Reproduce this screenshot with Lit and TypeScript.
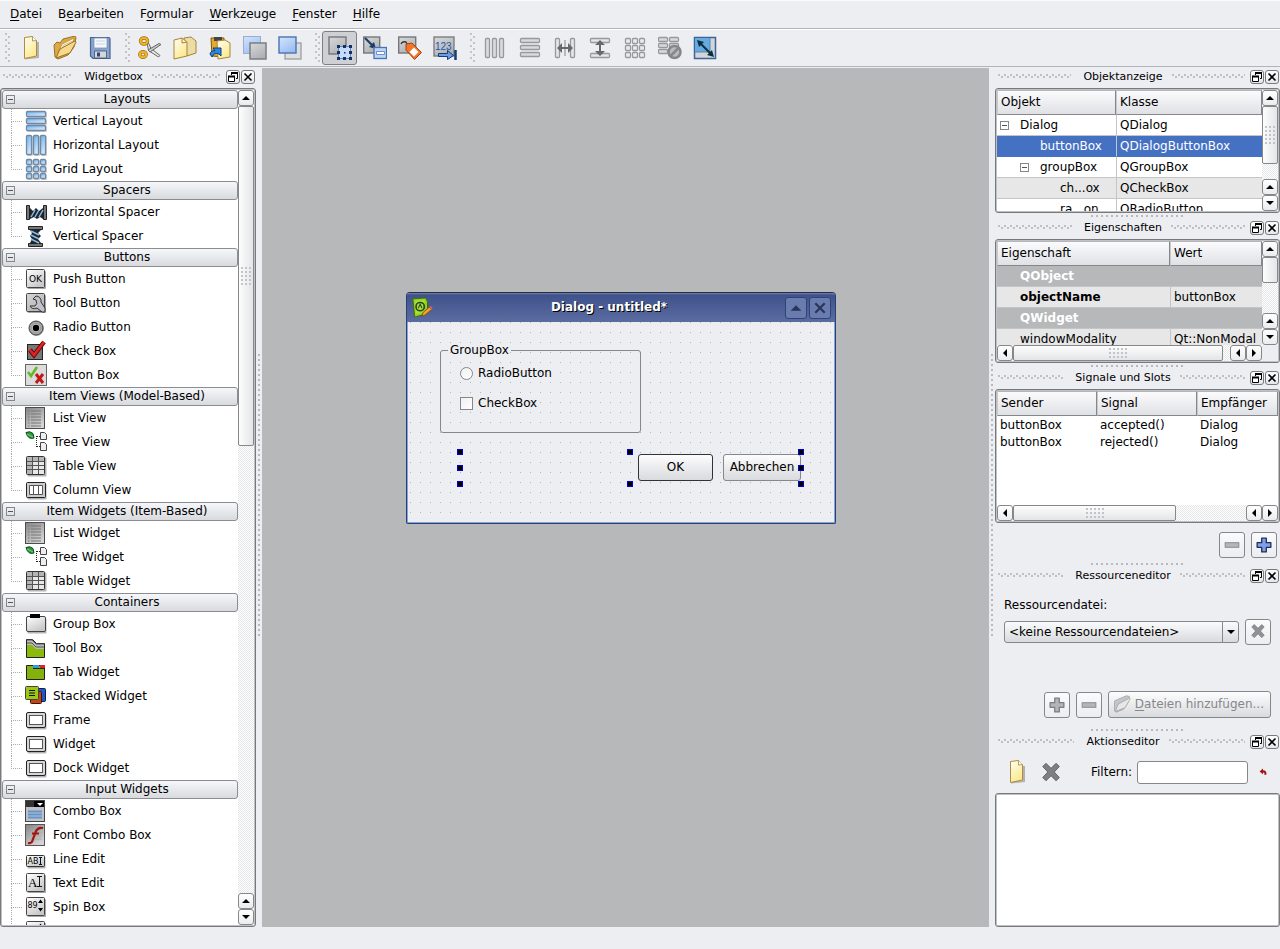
import { LitElement, html, svg, css, nothing } from "lit";
import { customElement, property } from "lit/decorators.js";
import { classMap } from "lit/directives/class-map.js";

/* ---------- icon drawings ---------- */

const sheet = svg`<path d="M7 22.500l13-1.500V6" fill="none" stroke="#000" opacity=".25" stroke-width="2"/>
  <path d="M6.500 1.500l8-1 4 4v15.500l-12 2.500z" fill="url(#paper)" stroke="#b08a40" stroke-linejoin="round"/>
  <path d="M14.500 .5v4.500l4-.5" fill="#fffdf0" stroke="#9d8450" stroke-width=".8"/>`;

const tile = (x: number, y: number, w: number, h: number, fill: string, line: string) =>
  svg`<rect x=${x + 0.5} y=${y + 0.5} width=${w - 1} height=${h - 1} rx="1" fill=${fill} stroke=${line} stroke-width="1.300"/>`;

const bluePart = (x: number, y: number, w: number, h: number) =>
  svg`<rect x=${x + 1} y=${y + 1} width=${w} height=${h} rx="1" fill="#000" opacity=".2"/>${tile(x, y, w, h, "url(#blue)", "#7288a3")}`;

const grid = (part: (x: number, y: number) => unknown) => [0, 1, 2].map((r) => [0, 1, 2].map((c) => part(1 + c * 7, 1 + r * 7)));

const plus = (fill: string, line: string) =>
  svg`<path d="M9.500 4.500h5v5h5v5h-5v5h-5v-5h-5v-5h5z" fill=${fill} stroke=${line} stroke-linejoin="round" stroke-width="1.400"/>`;

const cross = (fill: string, line: string) =>
  svg`<path d="M3 6l3.500-3.500L12 8l5.500-5.500L21 6l-5.500 6 5.500 6-3.500 3.500L12 16l-5.500 5.500L3 18l5.500-6z" fill=${fill} stroke=${line} stroke-linejoin="round"/>`;

const listPage = svg`<rect x=".5" y=".5" width="19" height="21" fill="url(#steel)" stroke="#4d4d4d"/>
  <path d="M3 4h1.500M3 7h1.500M3 10h1.500M3 13h1.500M3 16h1.500M3 19h1.500M6 4h10M6 7h10M6 10h10M6 13h10M6 16h10M6 19h10" stroke="#777"/>`;

const treePic = svg`<path d="M1 1.500q4-2 7 1l1 4.500q-6 2-8-5.500z" fill="#2f9a3c" stroke="#0d4a18"/><path d="M2 3l6 3" stroke="#8fe098" stroke-width=".8"/>
  <path d="M11.500 5v12M12 5.500h4M12 15.500h4" stroke="#222" stroke-dasharray="1 1"/>
  <path d="M15.500 1.500h4l2 2v5h-6zM15.500 11.500h4l2 2v6h-6z" fill="#eee" stroke="#444"/>`;

const tablePic = svg`<rect x="2.500" y="2.500" width="19" height="19" rx="1" fill="#000" opacity=".3"/><rect x="1.500" y="1.500" width="18" height="18" rx="1" fill="#e8e8e8" stroke="#333"/>
  <path d="M2 2h17v4H2zM2 2h5v17H2z" fill="#b5b5b5"/>
  <path d="M2 6.500h17M2 10.500h17M2 14.500h17M7.500 2v17M13.500 2v17" stroke="#555"/>`;

const framePic = svg`<rect x="2.500" y="4.500" width="19" height="16" rx="1.500" fill="#000" opacity=".3"/><rect x="1.500" y="3.500" width="19" height="15" rx="1.500" fill="#d6d6d6" stroke="#222"/>
  <rect x="4.500" y="6.500" width="13" height="9" fill="#fff" stroke="#555"/>`;

const keycap = svg`<rect x="2.500" y="3" width="18.500" height="18" rx="1" fill="#000" opacity=".35"/><rect x="1.500" y="1.500" width="18" height="18" rx="1" fill="url(#key)" stroke="#444"/>`;

const PICTURES: Record<string, unknown> = {
  neu: sheet,
  open: svg`<path d="M1 9l3-3 3 1 3-4 12-3 1 2-2 9-6 8-10 4-3-2z" fill="#dba945" stroke="#9a7226"/><path d="M5 17L9 8 21 2l-2 10-9 8z" fill="#fff7dc" stroke="#b58a35" stroke-width=".8"/><path d="M7 16l4-7 9-4" fill="none" stroke="#c9ac6c" stroke-width=".8"/><path d="M3 22l4-9 15-8q2 1 0 3l-5 9z" fill="#f6d98c" stroke="#9a7226"/>`,
  save: svg`<path d="M2.500 1.500h18q1.500 0 1.500 1.500v19.500h-17l-2.500-2.500z" fill="#86a4cf" stroke="#46648f" stroke-width="1.200"/><path d="M6 2h13v10H6z" fill="#f4f7fb" stroke="#7b93b6" stroke-width=".8"/><path d="M8 5h9M8 8h9" stroke="#c9d4e4"/><path d="M6.500 15h12v7h-12z" fill="#d3d6db" stroke="#3c5172" stroke-width=".8"/><path d="M9 16.500h3v4H9z" fill="#33496c"/>`,
  cut: svg`<path d="M8 1.500l5 11 9 7-1.500 1.500-10-6.500z" fill="#e8e8e8" stroke="#666"/><path d="M23 8.500L12 16l-2-2 11-6.500z" fill="#c9c9c9" stroke="#666"/><ellipse cx="6" cy="5" rx="3.500" ry="3" fill="none" stroke="#a36f08" stroke-width="3.400"/><ellipse cx="6" cy="5" rx="3.500" ry="3" fill="none" stroke="#eeb52a" stroke-width="2"/><ellipse cx="5" cy="18.500" rx="3.200" ry="2.800" fill="none" stroke="#a36f08" stroke-width="3.400"/><ellipse cx="5" cy="18.500" rx="3.200" ry="2.800" fill="none" stroke="#eeb52a" stroke-width="2"/>`,
  copy: svg`<path d="M11 2l7-1 5 4v12l-9 3z" fill="#ecdca6" stroke="#a8843c"/><path d="M1 4l8-2 5 4v14L1 23z" fill="url(#paper)" stroke="#a8843c"/><path d="M9 2v5l5-1" fill="none" stroke="#a8843c"/>`,
  paste: svg`<path d="M3 2h13v19l-12-1z" fill="#e5ab2c" stroke="#7d580c"/><path d="M6 1h8v4H6z" fill="#444"/><path d="M9 5l8-1 5 3v14l-12 2z" fill="url(#paper)" stroke="#a8843c"/><path d="M2 18q1-4 5-3l-2-3h8v8l-2-2q-5-2-7 3z" fill="#2b87e3" stroke="#0d3e80"/>`,
  back: svg`<rect x=".5" y=".5" width="17" height="17" fill="url(#sky)" stroke="#9badcb"/><rect x="7" y="7" width="16" height="16" fill="url(#stone)" stroke="#7c7e80" stroke-width="1.500"/>`,
  front: svg`<rect x="7" y="7" width="16" height="16" fill="#dddee0" stroke="#9b9da0" stroke-width="1.300"/><rect x="1" y="1" width="17" height="16" fill="url(#sky)" stroke="#4a73b0" stroke-width="1.400"/>`,
  widgets: svg`<rect x="1" y="1" width="17" height="17" fill="url(#stone)" stroke="#75777a" stroke-width="1.400"/><rect x="10.500" y="10.500" width="12" height="12" fill="#c4dbfc" stroke="#5f86c4"/><path d="M9 9h3v3H9zM15 9h3v3h-3zM21 9h3v3h-3zM9 15h3v3H9zM21 15h3v3h-3zM9 21h3v3H9zM15 21h3v3h-3zM21 21h3v3h-3zM16 16h1.500v1.500H16z" fill="#17305f"/>`,
  signals: svg`<rect x=".7" y="1" width="16" height="16" fill="url(#stone)" stroke="#75777a" stroke-width="1.400"/><path d="M2 2l8 8" stroke="#1d3d66" stroke-width="2.200"/><path d="M13 13l-7-2 5-5z" fill="#1d3d66"/><rect x="11" y="11.500" width="12.500" height="11" fill="#bcd6fb" stroke="#4a73b0" stroke-width="1.300"/><path d="M13.500 15.500h8v3h-8z" fill="#fff" stroke="#6f92c8"/>`,
  buddies: svg`<rect x=".7" y="1" width="17" height="16" fill="url(#stone)" stroke="#75777a" stroke-width="1.400"/><path d="M3 8q1-3 5-2l2 4" fill="none" stroke="#333" stroke-width="1.300"/><path d="M8 8l6-1 9.500 9.500-7 7L8 14z" fill="#f0762c" stroke="#a9410d"/><path d="M16 11.500l4.500 4.500-4.500 4.500-4.500-4.500z" fill="#fff"/>`,
  order: svg`<rect x="1" y="1" width="20" height="19" fill="url(#stone)" stroke="#75777a" stroke-width="1.300"/><text x="2" y="14" font-size="10" font-family="Liberation Sans, sans-serif" fill="#1d57b0">123</text><path d="M5.500 17.500h9v-3l6 5-6 4v-3h-9z" fill="#6c9de2" stroke="#143b7c"/><path d="M22.500 14v10" stroke="#143b7c" stroke-width="2.500"/>`,
  columns: [2, 9, 16].map((x) => tile(x, 2, 5, 20, "#d9dadc", "#98999b")),
  rows: [2, 9, 16].map((y) => tile(2, y, 20, 5, "#d9dadc", "#98999b")),
  hsplit: svg`${tile(2, 2, 5, 20, "#e4e5e7", "#98999b")}${tile(17, 2, 5, 20, "#e4e5e7", "#98999b")}<path d="M12 4v16" stroke="#808285"/><path d="M4 12l5-5v4h6V7l5 5-5 5v-4H9v4z" fill="#66686b"/>`,
  vsplit: svg`${tile(2, 2, 20, 5, "#e4e5e7", "#98999b")}${tile(2, 17, 20, 5, "#e4e5e7", "#98999b")}<path d="M12 4l5 5h-4v6h4l-5 5-5-5h4V9H7z" fill="#66686b"/>`,
  gridGrey: grid((x, y) => tile(x + 1, y + 1, 6, 6, "#ececee", "#98999b")),
  breakLayout: svg`${[1, 7, 13].map((y) => [0, 11].map((x) => tile(x, y, 10, 5, "#d9dadc", "#98999b")))}<circle cx="16.500" cy="16" r="6" fill="#b9babc" stroke="#85878a" stroke-width="2.500"/><path d="M12.500 20l8-8" stroke="#85878a" stroke-width="2.500"/>`,
  adjust: svg`<rect x="1.500" y="1.500" width="21" height="21" fill="#d3d5d7" stroke="#3c6498" stroke-width="1.500"/><path d="M2 2h15v14H2z" fill="#68aade"/><path d="M2 16h15V2" fill="none" stroke="#4a88bd"/><path d="M7 7l10 10" stroke="#0b3040" stroke-width="2"/><path d="M4 4l7 2-5 5zM21 21l-7-2 5-5z" fill="#0b3040"/>`,
  vbox: [1, 8, 15].map((y) => bluePart(1, y, 20, 6)),
  hbox: [1, 8, 15].map((x) => bluePart(x, 1, 6, 20)),
  gbox: grid((x, y) => bluePart(x, y, 6, 6)),
  hspace: svg`<path d="M5 18V7l3 3 3-3 3 3 4-3v11l-3-2-3 2-3-2z" fill="#1b2833"/><path d="M1.500 4.500h3v14h-3zM18.500 4.500h3v14h-3z" fill="#777" stroke="#222"/><path d="M6 16l4-7M10 16l4-7M14 16l4-7" stroke="#8fb8dc" stroke-width="1.500"/>`,
  vspace: svg`<path d="M5 5h11l-3 3 3 3-3 3 3 4H5l2-4-2-3 2-3z" fill="#1b2833"/><path d="M3.500 1.500h14v3h-14zM3.500 18.500h14v3h-14z" fill="#777" stroke="#222"/><path d="M6 6l8 4M6 10l8 4M6 14l8 4" stroke="#8fb8dc" stroke-width="1.500"/>`,
  push: svg`${keycap}<text x="4" y="13.500" font-size="9" font-family="DejaVu Sans">OK</text>`,
  tool: svg`${keycap}<path d="M2 2h17v17H2z" fill="#999" opacity=".4"/><path d="M11 4a5 5 0 0 1 5 6l4 6v4h-3l-5-4q-5 2-7-2h5q3-2 1-6l-3-1z" fill="#c2c2cc" stroke="#333"/>`,
  radio: svg`<circle cx="11.500" cy="12.500" r="7.500" fill="#000" opacity=".3"/><circle cx="11" cy="12" r="7" fill="#a5a5a5" stroke="#444"/><circle cx="11" cy="12" r="4.500" fill="#d0d0d0" stroke="#999"/><circle cx="11" cy="12" r="3.200"/>`,
  check: svg`<rect x="2.500" y="4.500" width="15" height="15" fill="#777" stroke="#222"/><path d="M5 10l4 5L19 2" fill="none" stroke="#600" stroke-width="4.500"/><path d="M5 10l4 5L19 2" fill="none" stroke="#dc2424" stroke-width="2.800"/>`,
  bbox: svg`<rect x=".5" y=".5" width="21" height="21" fill="#dcdcdc" stroke="#666"/><path d="M3 8l3 4 6-9" fill="none" stroke="#63ba22" stroke-width="2.500"/><path d="M11 10l7 9M18 10l-7 9" stroke="#c01a1a" stroke-width="3"/>`,
  list: listPage,
  tree: treePic,
  table: tablePic,
  column: svg`<rect x="2.500" y="4.500" width="19" height="16" rx="1" fill="#000" opacity=".3"/><rect x="1.500" y="3.500" width="19" height="15" rx="1" fill="#ccc" stroke="#222"/><path d="M4.500 6.500h13v9h-13zM8.500 6v10M13.500 6v10" fill="#fff" stroke="#555"/>`,
  group: svg`<rect x="2.500" y="5.500" width="19" height="15" rx="1" fill="#000" opacity=".3"/><rect x="1.500" y="3.500" width="19" height="15" rx="1.500" fill="url(#key)" stroke="#444"/><path d="M5 1h10v4H5z"/>`,
  toolbox: svg`<path d="M1.500 2.500h6l4 4h8v14h-18z" fill="#bbb" stroke="#222"/><path d="M2 6h5l4 4h8M2 3h5l4 4h8" fill="none" stroke="#555"/><path d="M2 8h5l4 4h8v8H2z" fill="#8aba0c"/>`,
  tab: svg`<path d="M1.500 4.500h18v14h-18z" fill="#83b30a" stroke="#222"/><path d="M8 4h6v3H8z" fill="#2a9be8"/><path d="M15 4h5v3h-5z" fill="#e02525"/><path d="M8 7.500h12" stroke="#222"/>`,
  stacked: svg`<rect x="8.500" y="3.500" width="12" height="13" rx="1" fill="#2257bf" stroke="#0b1f52"/><rect x="5.500" y="6.500" width="11" height="12" rx="1" fill="#c0451a" stroke="#43150a"/><rect x=".5" y="1.500" width="13" height="13" rx="1" fill="#9cc813" stroke="#444"/><path d="M4 5.500h6M4 8h6M4 10.500h6" stroke="#111"/>`,
  frame: framePic,
  combo: svg`<rect x=".5" y=".5" width="19" height="21" fill="#bfc1c4" stroke="#444"/><path d="M9 1h10v6H9z"/><path d="M1 1h8v6H1z" fill="#333"/><path d="M12 3h6l-3 3z" fill="#fff"/><path d="M3 11.500h14M3 14.500h14M3 17.500h14" stroke="#6394cf" stroke-width="2"/>`,
  font: svg`<rect x=".5" y=".5" width="19" height="21" fill="url(#steel)" stroke="#555"/><path d="M5 9h12M5 12h12M5 15h12" stroke="#aaa"/><path d="M3 19q4 1 5-4l3-8q2-4 7-3M7 9.500h7" fill="none" stroke="#a31515" stroke-width="2.200"/>`,
  line: svg`<rect x="2.500" y="8.500" width="18" height="12" rx="1" fill="#000" opacity=".3"/><rect x="1.500" y="7.500" width="18" height="11" rx="1" fill="url(#key)" stroke="#333"/><text x="2.500" y="16" font-size="8" font-family="DejaVu Sans">AB</text><path d="M14 9.500h3M15.500 9.500v7M14 16.500h3" stroke="#111"/>`,
  text: svg`${keycap}<text x="3" y="15" font-size="13" font-family="Liberation Serif">A</text><path d="M12 4.500h5M14.500 4.500v10M12 14.500h5" stroke="#111"/>`,
  spin: svg`${keycap}<text x="2.500" y="12" font-size="8" font-family="DejaVu Sans">89</text><path d="M13 7h5l-2.500-3.500zM13 12h5l-2.500 3.500z"/>`,
  plusBlue: plus("#7f9fe6", "#1c2f63"),
  plusGrey: plus("#b3b5b8", "#7b7d80"),
  minus: svg`<rect x="4.500" y="9.500" width="15" height="5" fill="#b3b5b8" stroke="#85878a"/>`,
  cross: svg`<g transform="translate(1 1) scale(.92)">${cross("#7d7f82", "#5c5e61")}</g>`,
  crossSmall: svg`<g transform="translate(3 2) scale(.75)">${cross("#8f9194", "#6f7174")}</g>`,
  folderGrey: svg`<path d="M2 8l4-2 12-5 4 1-2 8-6 9-10 4-2-2z" fill="#c4c5c7" stroke="#9d9fa1"/><path d="M3 22l4-10 15-8q2 1 0 3l-6 10z" fill="#e6e7e8" stroke="#9d9fa1"/>`,
  undo: svg`<path d="M1 6l6-5v3q7 0 6 8H9q2-4-2-4v3z" fill="#a31515"/>`,
  designer: svg`<path d="M2 2l14-1 2 4v13L4 22z" fill="#8dd21f" stroke="#3c6a06"/><path d="M4 4l11-1v13L5 19z" fill="#a6df3c"/><circle cx="10" cy="10.500" r="4.500" fill="none" stroke="#30451a" stroke-width="1.800"/><path d="M8 12l2-4 2 4" fill="none" stroke="#30451a" stroke-width="1.200"/><path d="M12 21l1-4 7-6 2.500 2.500-7 6z" fill="#f1a12a" stroke="#7a3b0a" stroke-width=".8"/><path d="M20 11l1.500-1.200 2 2L22.500 14z" fill="#d9605a"/>`,
  restore: svg`<path d="M4.500 4V2.500h6v5H9" fill="none" stroke="#000"/><path d="M4 2h7" stroke="#000" stroke-width="2"/><path d="M1.500 5.500h6v5h-6z" fill="#fff" stroke="#000"/><path d="M1 5.500h7" stroke="#000" stroke-width="2"/>`,
  close: svg`<path d="M2.500 2.500l7 7M9.500 2.500l-7 7" stroke="currentColor" stroke-width="1.600"/>`,
  up: svg`<path d="M2 8h8L6 4z" fill="currentColor"/>`,
  down: svg`<path d="M2 4h8L6 8z" fill="currentColor"/>`,
  left: svg`<path d="M8 2v8L4 6z" fill="currentColor"/>`,
  right: svg`<path d="M4 2v8l4-4z" fill="currentColor"/>`,
};

@customElement("ui-icon")
class UiIcon extends LitElement {
  @property() name = "";
  @property({ type: Number }) box = 24;
  static styles = css`
    :host { display: block; flex: none; }
    svg { display: block; }
  `;
  render() {
    const gradient = (id: string, from: string, to: string) =>
      svg`<linearGradient id=${id} x1="0" y1="0" x2="0.6" y2="1"><stop offset="0" stop-color=${from}/><stop offset="1" stop-color=${to}/></linearGradient>`;
    return html`<svg width="100%" viewBox="0 0 ${this.box} ${this.box}" aria-hidden="true">
      <defs>
        ${gradient("paper", "#fffef4", "#fbe98c")}${gradient("steel", "#858585", "#d4d4d4")}
        ${gradient("key", "#ffffff", "#c8c8c8")}${gradient("stone", "#d8d9da", "#aeb0b1")}
        ${gradient("sky", "#d4e4fc", "#9bbff3")}${gradient("blue", "#62b0f0", "#d9ecfd")}
      </defs>
      ${PICTURES[this.name] ?? nothing}
    </svg>`;
  }
}

@customElement("dock-title")
class DockTitle extends LitElement {
  @property() label = "";
  static styles = css`
    :host { display: flex; align-items: center; flex: none; height: 20px; padding: 0 1px 2px 3px; box-sizing: border-box; gap: 1px; }
    .dots { flex: 1; height: 6px; margin-right: 4px;
      background: conic-gradient(from 270deg at 2px 2px, #bfc0c3 90deg, transparent 0) 0 0 / 6px 6px,
        conic-gradient(from 270deg at 2px 2px, #bfc0c3 90deg, transparent 0) 3px 2px / 6px 6px; }
    h2 { font: 11px/16px "DejaVu Sans", sans-serif; margin: 0 8px 0 7px; }
    button { width: 14px; height: 14px; padding: 0; border: 1px solid #77797c; border-radius: 3px; background: linear-gradient(#fff, #e6e7ea); color: #000; }
    ui-icon { width: 12px; }
  `;
  render() {
    return html`<span class="dots"></span><h2>${this.label}</h2><span class="dots"></span>
      <button aria-label="Abdocken"><ui-icon name="restore" box="12"></ui-icon></button>
      <button aria-label="Schließen"><ui-icon name="close" box="12"></ui-icon></button>`;
  }
}

@customElement("scroll-bar")
class ScrollBar extends LitElement {
  @property({ type: Boolean, reflect: true }) horizontal = false;
  @property({ type: Boolean }) plain = false;
  @property({ type: Number }) share = 50;
  static styles = css`
    :host { display: flex; flex-direction: column; flex: none; width: 16px; }
    :host([horizontal]) { flex-direction: row; width: auto; height: 16px; }
    button { flex: none; box-sizing: border-box; width: 16px; height: 16px; padding: 0 2px; border: 1px solid #85878a; border-radius: 3px; background: linear-gradient(#fff, #ebecee); color: #000; }
    .track { flex: 1; display: flex; flex-direction: inherit; min-height: 0; background: repeating-conic-gradient(#fff 0 25%, #e6e7e9 0 50%) 0 0 / 2px 2px; }
    .thumb { box-sizing: border-box; display: grid; place-items: center; border: 1px solid #85878a; border-radius: 2px; background: linear-gradient(90deg, #fdfdfd, #e4e5e8); }
    :host([horizontal]) .thumb { background: linear-gradient(#fdfdfd, #e4e5e8); }
    .grip { width: 10px; height: 18px; background: conic-gradient(from 270deg at 2px 2px, #c3c4c7 90deg, transparent 0) 0 0 / 4px 4px; }
    :host([horizontal]) .grip { width: 18px; height: 10px; }
    .plain .grip { display: none; }
    ui-icon { width: 12px; margin: 0 -1px; }
  `;
  render() {
    const [back, forth] = this.horizontal ? ["left", "right"] : ["up", "down"];
    const step = (name: string) =>
      html`<button aria-label=${name === back ? "Zurück" : "Vor"}><ui-icon name=${name} box="12"></ui-icon></button>`;
    return html`${step(back)}
      <div class="track"><div class=${classMap({ thumb: true, plain: this.plain })} style="flex: 0 0 ${this.share}%"><span class="grip"></span></div></div>
      ${step(back)}${step(forth)}`;
  }
}

/* ---------- data ---------- */

const MENUS: [string, number][] = [["Datei", 0], ["Bearbeiten", 0], ["Formular", 1], ["Werkzeuge", 0], ["Fenster", 0], ["Hilfe", 0]];
MENUS[1][1] = 1;

const TOOLS = [
  ["neu:Neu", "open:Öffnen", "save:Speichern"],
  ["cut:Ausschneiden", "copy:Kopieren", "paste:Einfügen", "back:Nach hinten", "front:Nach vorn"],
  ["widgets:Widgets bearbeiten", "signals:Signale und Slots bearbeiten", "buddies:Buddies bearbeiten", "order:Tabulatorreihenfolge"],
  ["columns:Waagrecht anordnen", "rows:Senkrecht anordnen", "hsplit:Splitter waagrecht", "vsplit:Splitter senkrecht", "gridGrey:Rasteranordnung", "breakLayout:Layout auflösen", "adjust:Größe anpassen"],
];

const WIDGETS: [string, [string, string][]][] = [
  ["Layouts", [["vbox", "Vertical Layout"], ["hbox", "Horizontal Layout"], ["gbox", "Grid Layout"]]],
  ["Spacers", [["hspace", "Horizontal Spacer"], ["vspace", "Vertical Spacer"]]],
  ["Buttons", [["push", "Push Button"], ["tool", "Tool Button"], ["radio", "Radio Button"], ["check", "Check Box"], ["bbox", "Button Box"]]],
  ["Item Views (Model-Based)", [["list", "List View"], ["tree", "Tree View"], ["table", "Table View"], ["column", "Column View"]]],
  ["Item Widgets (Item-Based)", [["list", "List Widget"], ["tree", "Tree Widget"], ["table", "Table Widget"]]],
  ["Containers", [["group", "Group Box"], ["toolbox", "Tool Box"], ["tab", "Tab Widget"], ["stacked", "Stacked Widget"], ["frame", "Frame"], ["frame", "Widget"], ["frame", "Dock Widget"]]],
  ["Input Widgets", [["combo", "Combo Box"], ["font", "Font Combo Box"], ["line", "Line Edit"], ["text", "Text Edit"], ["spin", "Spin Box"], ["spin", ""]]],
];

const OBJECTS = [
  { name: "Dialog", type: "QDialog", depth: 0, open: true },
  { name: "buttonBox", type: "QDialogButtonBox", depth: 1, selected: true },
  { name: "groupBox", type: "QGroupBox", depth: 1, open: true },
  { name: "ch...ox", type: "QCheckBox", depth: 2, shaded: true },
  { name: "ra...on", type: "QRadioButton", depth: 2 },
];

const HANDLES = [[52, 130], [222, 130], [393, 130], [52, 146], [393, 146], [52, 162], [222, 162], [393, 162]];

@customElement("app-root")
class AppRoot extends LitElement {
  static styles = css`
    :host { display: flex; flex-direction: column; height: 100vh; overflow: hidden; background: #edeef2; color: #000; font: 12px/16px "DejaVu Sans", "Bitstream Vera Sans", sans-serif; }
    * { box-sizing: border-box; }
    button, input, select { font: inherit; color: inherit; margin: 0; }
    u { text-underline-offset: 2px; }

    .menubar { display: flex; align-items: center; height: 29px; padding: 0 2px 2px; border-top: 1px solid #fafbfc; border-bottom: 1px solid #b3b4b7; }
    .menubar button { border: 0; background: none; padding: 0 8px; }
    .toolbar { display: flex; align-items: center; height: 38px; padding-left: 5px; border-top: 1px solid #fff; border-bottom: 1px solid #b3b4b7; }
    .tools { display: flex; align-items: center; }
    .grab { width: 5px; height: 30px; margin-right: 2px;
      background: conic-gradient(from 270deg at 2px 2px, #c3c4c7 90deg, transparent 0) 0 0 / 6px 6px,
        conic-gradient(from 270deg at 2px 2px, #c3c4c7 90deg, transparent 0) 3px 3px / 6px 6px; }
    .tools + .tools .grab { margin-left: 8px; }
    .tools button { width: 35px; height: 34px; padding: 0 4px; border: 1px solid transparent; border-radius: 3px; background: none; }
    .tools button.on { border-color: #7d7f82; background: #cfd0d3; }
    .tools ui-icon { width: 24px; margin: auto; }

    .main { flex: 1; min-height: 0; display: grid; grid-template-columns: 256px 6px minmax(0, 1fr) 6px 285px; margin-top: 1px; }
    .desk { background: #b6b8ba; position: relative; overflow: hidden; }
    .status { flex: none; height: 22px; }
    .dock { display: flex; flex-direction: column; min-height: 0; }
    .splitter { align-self: center; width: 3px; height: 282px; margin-bottom: 6px; justify-self: center; background: conic-gradient(from 270deg at 2px 2px, #b9babd 90deg, transparent 0) 0 0 / 5px 5px; }
    .divider { flex: none; align-self: center; width: 93px; height: 2px; margin: 2px 0; background: conic-gradient(from 270deg at 2px 2px, #b9babd 90deg, transparent 0) 0 0 / 5px 5px; }
    .frame { display: flex; border: 1px solid #77797c; border-radius: 3px; box-shadow: inset 0 0 0 1px #c0c1c4; padding: 1px; background: #fff; overflow: hidden; min-height: 0; }
    .fill { flex: 1; }
    .column { flex-direction: column; }

    .widgets { flex: 1; overflow: hidden; }
    .group { position: relative; display: flex; align-items: center; justify-content: center; width: 100%; height: 19px; padding: 0 0 2px 14px; border: 1px solid #8b8d90; border-radius: 3px; background: linear-gradient(#f6f7fa, #d9dade); }
    .toggle { width: 9px; height: 9px; border: 1px solid #85878a; background: linear-gradient(#555, #555) center / 5px 1px no-repeat; flex: none; }
    .group .toggle { position: absolute; left: 3px; top: 4px; }
    ul { list-style: none; margin: 0; padding: 0; }
    li { display: flex; align-items: center; gap: 6px; height: 24px; padding-left: 23px; position: relative; }
    li ui-icon { width: 22px; }
    li::before { content: ""; position: absolute; left: 9px; top: 0; width: 10px; height: 12px; border-left: 1px dotted #aaa; border-bottom: 1px dotted #aaa; }
    li:not(:last-child)::after { content: ""; position: absolute; left: 9px; top: 12px; height: 12px; border-left: 1px dotted #aaa; }

    .view { flex: 1; overflow: hidden; min-height: 0; min-width: 0; }
    table { width: 100%; table-layout: fixed; border-collapse: separate; border-spacing: 0; }
    th { height: 25px; padding: 0 3px 2px; text-align: left; font-weight: normal; border: 1px solid #85878a; border-top-color: #b5b6b9; border-left-color: #c8c9cc; background: linear-gradient(#fbfbfd, #e0e1e5); }
    td { height: 21px; padding: 0 3px; border-bottom: 1px solid #c4c5c7; white-space: nowrap; overflow: hidden; }
    td + td { border-left: 1px solid #c4c5c7; }
    .c119 { width: 119px; }
    .c173 { width: 173px; }
    .c100 { width: 100px; }
    .node { display: flex; align-items: center; }
    .node .toggle, .blank { width: 9px; margin-right: 11px; }
    .blank { flex: none; }
    .indent { flex: none; width: 20px; }
    .selected td { background: #4571c3; color: #fff; border-bottom-color: #4571c3; }
    .shaded td { background: #e7e7e7; }
    .section td { background: #b6b8ba; color: #fff; font-weight: bold; padding-left: 23px; }
    .property td { background: #e7e7e7; }
    .property td:first-child { padding-left: 23px; }
    .changed td:first-child { font-weight: bold; }
    .plain td { height: 17px; border: 0; padding: 0 3px; }
    .objects { height: 125px; }
    .props { height: 124px; }
    .signals { height: 134px; }
    .corner { width: 16px; background: #edeef2; }
    .row { display: flex; }

    .push { border: 1px solid #85878a; border-radius: 3px; background: linear-gradient(#fdfdfe, #d9dadd); padding: 0 0 2px; }
    .small { width: 26px; height: 26px; padding: 1px; background: linear-gradient(#fbfbfc, #ecedf0); }
    .small ui-icon { width: 22px; }
    .actions { display: flex; justify-content: flex-end; align-items: center; gap: 6px; }
    .edit { padding: 9px 3px 3px; }
    .resources { padding: 0 9px 9px; height: 140px; display: flex; flex-direction: column; flex: none; }
    .resources label { padding: 10px 0 6px; }
    .pick { display: flex; align-items: center; gap: 6px; }
    .combo { flex: 1; position: relative; display: flex; min-width: 0; }
    select { flex: 1; min-width: 0; appearance: none; height: 22px; padding: 0 20px 1px 4px; border: 1px solid #85878a; border-radius: 3px; background: linear-gradient(#fafbfc, #d9dadd); }
    .arrow { position: absolute; right: 1px; top: 1px; height: 20px; width: 16px; border-left: 1px solid #85878a; display: grid; place-items: center; pointer-events: none; }
    .arrow ui-icon { width: 12px; }
    .resources .actions { margin-top: auto; }
    .add { display: flex; align-items: center; gap: 4px; height: 27px; padding: 0 6px 1px 4px; color: #85878a; }
    .add ui-icon { width: 18px; }
    .filter { display: flex; align-items: center; flex: none; height: 40px; padding: 0 6px 2px 9px; }
    .flat { border: 0; background: none; padding: 0; width: 24px; }
    .flat.gap { margin-left: 11px; }
    .filter label { margin-left: 28px; }
    .filter input { flex: 1; min-width: 0; height: 23px; margin: 0 4px 0 5px; border: 1px solid #85878a; border-radius: 3px; background: #fff; padding: 0 3px; }
    .tiny { width: 22px; }
    .tiny ui-icon { width: 8px; margin: auto; }

    .window { position: absolute; left: 144px; top: 224px; width: 430px; height: 232px; display: flex; flex-direction: column; border: 1px solid #24417b; border-top-color: #2b2f3c; border-radius: 4px 4px 2px 2px; box-shadow: inset 0 0 0 1px #86a3d4; }
    .caption { flex: none; height: 29px; display: flex; align-items: center; gap: 2px; padding: 0 4px; background: linear-gradient(#7181b0 0, #3f528b 2px, #5b6ca1); border-radius: 3px 3px 0 0; }
    .caption ui-icon { width: 22px; }
    .caption h1 { flex: 1; margin: 0; padding-bottom: 2px; text-align: center; color: #fff; font-size: 12px; line-height: 16px; text-shadow: 1px 1px #000; }
    .caption button { width: 22px; height: 22px; padding: 2px; border: 1px solid #2e4377; border-radius: 3px; background: #6a7bad; color: #27355c; }
    .caption button ui-icon { width: 16px; }
    .form { flex: 1; position: relative; margin: 0 1px 1px; background: conic-gradient(from 270deg at 1px 1px, #b4b5b8 90deg, transparent 0) 2px 0 / 10px 10px, #edeef2; }
    fieldset { position: absolute; left: 32px; top: 20px; width: 201px; height: 91px; margin: 0; padding: 0 19px; border: 1px solid #85878a; border-radius: 3px; }
    legend { padding: 0 2px; margin-left: -12px; }
    .option { display: flex; align-items: center; gap: 5px; height: 30px; }
    .option input { appearance: none; width: 13px; height: 13px; border: 1px solid #85878a; background: linear-gradient(135deg, #f0f0f0, #fff); }
    .option input[type="radio"] { border-radius: 50%; }
    .ok, .cancel { position: absolute; top: 132px; height: 27px; white-space: nowrap; }
    .ok { left: 230px; width: 75px; border-color: #333; }
    .cancel { left: 315px; width: 78px; }
    .handle { position: absolute; width: 6px; height: 6px; margin: -3px; background: #000; border: 1px solid #0000d8; }
  `;

  private mnemonic(text: string, at: number) {
    return html`${text.slice(0, at)}<u>${text[at]}</u>${text.slice(at + 1)}`;
  }

  private small(name: string, label: string) {
    return html`<button class="push small" aria-label=${label}><ui-icon name=${name}></ui-icon></button>`;
  }

  private renderWidgetBox() {
    return html`<aside class="dock">
      <dock-title label="Widgetbox"></dock-title>
      <div class="frame fill">
        <div class="widgets">
          ${WIDGETS.map(([title, items]) => html`
            <button class="group"><span class="toggle"></span>${title}</button>
            <ul>${items.map(([icon, label]) => html`<li><ui-icon name=${icon} box="22"></ui-icon>${label}</li>`)}</ul>`)}
        </div>
        <scroll-bar share="43.2"></scroll-bar>
      </div>
    </aside>`;
  }

  private renderDialog() {
    return html`<section class="window">
      <header class="caption">
        <ui-icon name="designer"></ui-icon>
        <h1>Dialog - untitled*</h1>
        <button aria-label="Einrollen"><ui-icon name="up" box="12"></ui-icon></button>
        <button aria-label="Fenster schließen"><ui-icon name="close" box="12"></ui-icon></button>
      </header>
      <div class="form">
        <fieldset>
          <legend>GroupBox</legend>
          <label class="option"><input type="radio" name="choice" />RadioButton</label>
          <label class="option"><input type="checkbox" />CheckBox</label>
        </fieldset>
        <button class="push ok">OK</button>
        <button class="push cancel">Abbrechen</button>
        ${HANDLES.map(([x, y]) => html`<span class="handle" style="left:${x}px;top:${y}px"></span>`)}
      </div>
    </section>`;
  }

  private renderObjects() {
    return html`<dock-title label="Objektanzeige"></dock-title>
      <div class="frame objects">
        <div class="view"><table>
          <thead><tr><th class="c119">Objekt</th><th>Klasse</th></tr></thead>
          <tbody>${OBJECTS.map((o) => html`<tr class=${classMap({ selected: !!o.selected, shaded: !!o.shaded })}>
            <td><div class="node">${Array.from({ length: o.depth }, () => html`<span class="indent"></span>`)}<span class=${o.open ? "toggle" : "blank"}></span>${o.name}</div></td>
            <td>${o.type}</td></tr>`)}</tbody>
        </table></div>
        <scroll-bar share="79"></scroll-bar>
      </div>`;
  }

  private renderProperties() {
    return html`<dock-title label="Eigenschaften"></dock-title>
      <div class="frame column props">
        <div class="row view">
          <div class="view"><table>
            <thead><tr><th class="c173">Eigenschaft</th><th>Wert</th></tr></thead>
            <tbody>
              <tr class="section"><td colspan="2">QObject</td></tr>
              <tr class="property changed"><td>objectName</td><td>buttonBox</td></tr>
              <tr class="section"><td colspan="2">QWidget</td></tr>
              <tr class="property"><td>windowModality</td><td>Qt::NonModal</td></tr>
            </tbody>
          </table></div>
          <scroll-bar plain share="46"></scroll-bar>
        </div>
        <div class="row"><scroll-bar class="fill" horizontal share="96.8"></scroll-bar><span class="corner"></span></div>
      </div>`;
  }

  private renderSignals() {
    return html`<dock-title label="Signale und Slots"></dock-title>
      <div class="frame column signals">
        <div class="view"><table class="plain">
          <thead><tr><th class="c100">Sender</th><th class="c100">Signal</th><th>Empfänger</th></tr></thead>
          <tbody>
            <tr><td>buttonBox</td><td>accepted()</td><td>Dialog</td></tr>
            <tr><td>buttonBox</td><td>rejected()</td><td>Dialog</td></tr>
          </tbody>
        </table></div>
        <scroll-bar horizontal share="70"></scroll-bar>
      </div>
      <div class="actions edit">${this.small("minus", "Verbindung löschen")}${this.small("plusBlue", "Verbindung hinzufügen")}</div>`;
  }

  private renderResources() {
    return html`<dock-title label="Ressourceneditor"></dock-title>
      <div class="resources">
        <label for="file">Ressourcendatei:</label>
        <div class="pick">
          <div class="combo"><select id="file"><option>&lt;keine Ressourcendateien&gt;</option></select><span class="arrow"><ui-icon name="down" box="12"></ui-icon></span></div>
          ${this.small("crossSmall", "Ressourcendatei entfernen")}
        </div>
        <div class="actions">
          ${this.small("plusGrey", "Hinzufügen")}${this.small("minus", "Entfernen")}
          <button class="push add" disabled><ui-icon name="folderGrey"></ui-icon><span>${this.mnemonic("Dateien hinzufügen...", 0)}</span></button>
        </div>
      </div>`;
  }

  private renderActions() {
    return html`<dock-title label="Aktionseditor"></dock-title>
      <div class="filter">
        <button class="flat" aria-label="Neue Aktion"><ui-icon name="neu"></ui-icon></button>
        <button class="flat gap" aria-label="Aktion löschen"><ui-icon name="cross"></ui-icon></button>
        <label for="filter">Filtern:</label><input id="filter" type="text" />
        <button class="flat tiny" aria-label="Filter zurücksetzen"><ui-icon name="undo" box="14"></ui-icon></button>
      </div>
      <div class="frame fill"></div>`;
  }

  render() {
    const divider = html`<span class="divider"></span>`;
    return html`
      <nav class="menubar">${MENUS.map(([text, at]) => html`<button>${this.mnemonic(text, at)}</button>`)}</nav>
      <div class="toolbar">
        ${TOOLS.map((set) => html`<div class="tools"><span class="grab"></span>${set.map((entry) => {
          const [icon, label] = entry.split(":");
          return html`<button class=${classMap({ on: icon === "widgets" })} aria-label=${label}><ui-icon name=${icon}></ui-icon></button>`;
        })}</div>`)}
      </div>
      <div class="main">
        ${this.renderWidgetBox()}
        <span class="splitter"></span>
        <main class="desk">${this.renderDialog()}</main>
        <span class="splitter"></span>
        <aside class="dock">
          ${this.renderObjects()}${divider}${this.renderProperties()}${divider}${this.renderSignals()}${divider}${this.renderResources()}${divider}${this.renderActions()}
        </aside>
      </div>
      <footer class="status"></footer>`;
  }
}
